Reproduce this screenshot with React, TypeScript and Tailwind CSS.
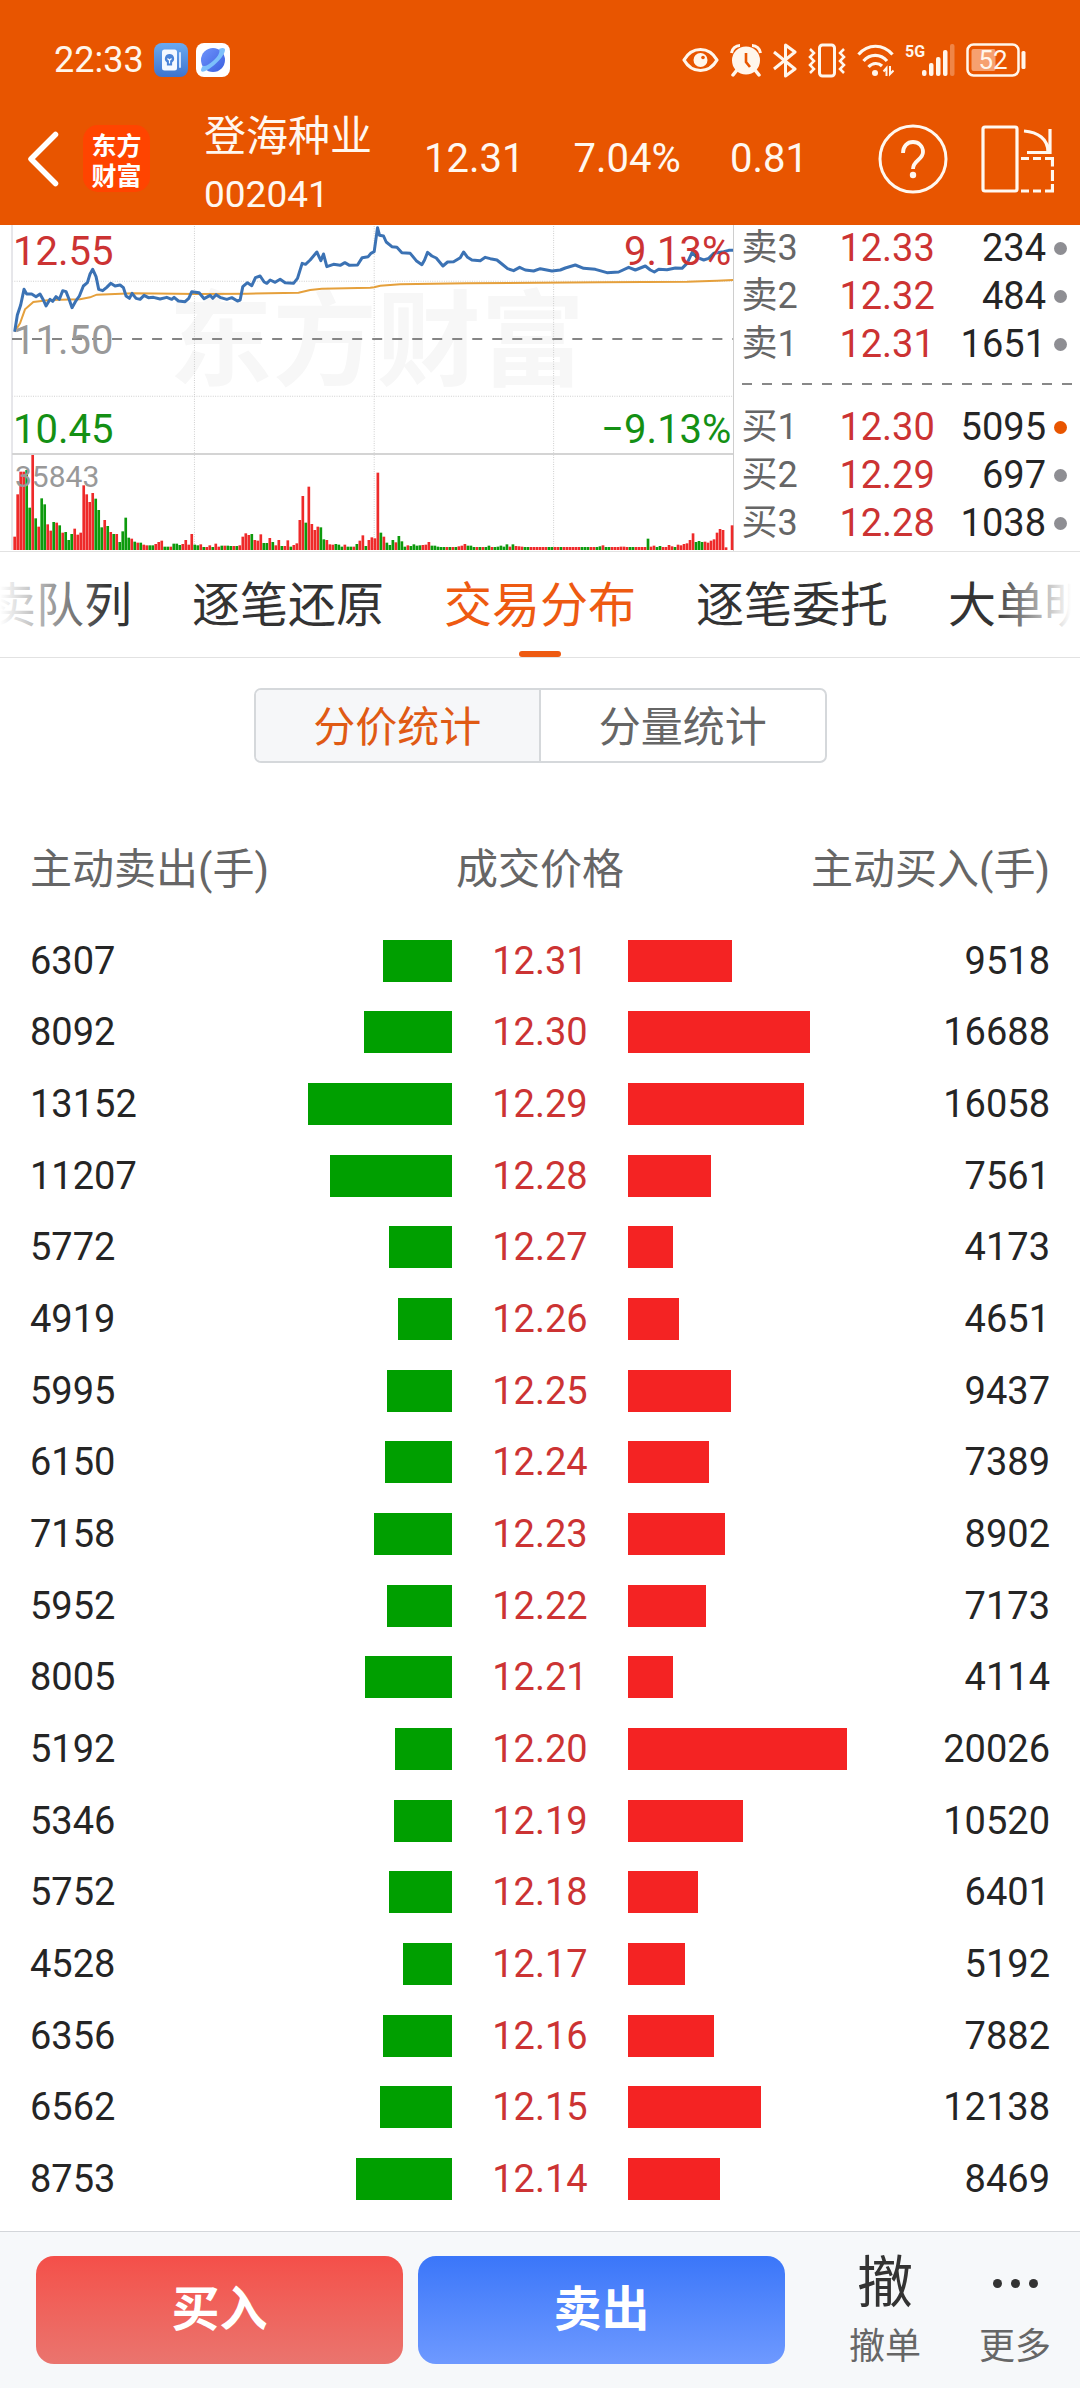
import React, { useState } from 'react';

interface PriceRow {
    sell: number;
    price: string;
    buy: number;
}

interface QuoteRow {
    label: string;
    price: string;
    volume: number;
    active?: boolean;
}

const ROWS: PriceRow[] = [
    { sell: 6307, price: '12.31', buy: 9518 },
    { sell: 8092, price: '12.30', buy: 16688 },
    { sell: 13152, price: '12.29', buy: 16058 },
    { sell: 11207, price: '12.28', buy: 7561 },
    { sell: 5772, price: '12.27', buy: 4173 },
    { sell: 4919, price: '12.26', buy: 4651 },
    { sell: 5995, price: '12.25', buy: 9437 },
    { sell: 6150, price: '12.24', buy: 7389 },
    { sell: 7158, price: '12.23', buy: 8902 },
    { sell: 5952, price: '12.22', buy: 7173 },
    { sell: 8005, price: '12.21', buy: 4114 },
    { sell: 5192, price: '12.20', buy: 20026 },
    { sell: 5346, price: '12.19', buy: 10520 },
    { sell: 5752, price: '12.18', buy: 6401 },
    { sell: 4528, price: '12.17', buy: 5192 },
    { sell: 6356, price: '12.16', buy: 7882 },
    { sell: 6562, price: '12.15', buy: 12138 },
    { sell: 8753, price: '12.14', buy: 8469 },
];

const MAX_VOLUME = Math.max(...ROWS.map((r) => Math.max(r.sell, r.buy)));

const ASKS: QuoteRow[] = [
    { label: '卖3', price: '12.33', volume: 234 },
    { label: '卖2', price: '12.32', volume: 484 },
    { label: '卖1', price: '12.31', volume: 1651 },
];

const BIDS: QuoteRow[] = [
    { label: '买1', price: '12.30', volume: 5095, active: true },
    { label: '买2', price: '12.29', volume: 697 },
    { label: '买3', price: '12.28', volume: 1038 },
];

const TABS = ['买卖队列', '逐笔还原', '交易分布', '逐笔委托', '大单明细'];

const PRICE_LINE =
    '44,335 52,285 62,255 72,208 80,222 95,222 108,230 120,222 130,240 138,258 150,238 158,244 168,230 178,238 188,212 198,215 208,240 216,263 226,245 238,228 250,198 262,188 270,162 278,148 288,170 296,208 308,212 320,202 332,190 345,198 360,195 370,203 378,228 388,235 396,220 408,235 420,238 432,226 445,233 460,232 480,237 500,232 515,238 522,232 535,243 555,245 566,235 575,215 597,218 612,236 630,226 638,235 648,224 662,233 680,238 695,233 712,243 720,240 728,200 742,188 755,197 766,173 780,168 792,186 800,190 810,180 825,187 840,178 855,188 880,190 892,175 906,130 916,133 930,120 950,96 962,122 970,102 980,140 1000,133 1020,136 1034,128 1048,136 1072,135 1086,113 1104,110 1112,100 1122,95 1132,23 1138,46 1150,48 1158,66 1175,80 1190,82 1205,98 1230,100 1248,122 1265,134 1273,120 1282,97 1295,108 1308,114 1328,138 1342,126 1360,125 1380,113 1390,96 1402,112 1415,120 1440,122 1455,112 1470,116 1490,120 1505,132 1522,146 1540,152 1558,142 1575,150 1600,153 1620,146 1655,153 1680,150 1695,144 1725,135 1750,145 1785,148 1820,158 1855,156 1885,142 1905,150 1935,138 1950,150 1962,156 1975,148 2000,149 2025,144 2045,145 2060,130 2075,98 2090,112 2110,120 2125,115 2140,100 2170,95 2185,91 2198,91';

const AVERAGE_LINE =
    '44,335 60,310 75,268 100,246 150,240 240,238 270,232 290,224 400,220 590,222 740,221 895,218 930,210 965,206 1110,203 1122,202 1140,197 1200,193 1400,190 1800,187 2060,185 2150,182 2198,180';

// one token per minute: direction + height
const VOLUMES = (
    'r40 r167 r235 r235 g240 g127 r285 g95 r70 g155 g137 r77 r58 g84 r82 g74 r52 g54 g30 g48 ' +
    'r64 r46 r52 r194 r167 r144 r171 g154 g120 g68 r90 g72 r54 g48 r48 g24 g56 g97 g37 r34 ' +
    'g25 r22 g22 r16 r14 g14 g14 r18 r24 r28 g10 g10 r10 g19 g19 g15 r18 r30 r16 r48 ' +
    'g16 g14 r17 g9 r9 r14 g9 r19 r10 g13 r13 g13 g12 r12 g12 r14 r40 r50 r45 g48 ' +
    'r30 r28 r47 g21 g21 r36 g24 r14 r30 g12 r12 r29 g10 r15 r20 r90 r162 g82 r190 r78 ' +
    'r60 r70 g68 g32 r30 r17 r16 g18 g16 g10 r16 g10 g10 r10 g18 r28 r44 g12 r30 r38 ' +
    'r35 r232 g52 r40 g22 g15 g30 r23 g42 g26 g10 r14 g12 g17 g13 g14 r15 r16 r24 g13 ' +
    'g13 g10 g9 g9 r9 g9 r9 g9 r11 r13 r18 g13 g13 g9 r9 g9 r9 g9 g13 r9 ' +
    'g9 g10 g13 g10 g17 r10 g17 r12 r11 r10 g9 g9 r9 r9 r9 r9 r9 r9 g9 g9 ' +
    'r9 r9 g9 r9 r9 r9 r9 r9 r9 g9 g9 g9 r9 r9 g9 g11 r14 g9 g9 r9 ' +
    'r9 r9 r10 r10 r9 g9 g9 r9 r9 r9 r9 g34 r10 r13 g9 g12 r9 r9 r15 r11 ' +
    'g9 r16 r14 r18 r20 r30 r50 g24 g27 g24 r25 r22 r28 r32 r52 r63 r60 r8 r0 r74'
).split(' ');

const StatusBar: React.FC = () => (
    <div className="flex h-9 items-center justify-between px-[54px] text-[#fff6ec]">
        <div className="flex items-center gap-2">
            <span className="text-[36px] leading-9">22:33</span>
            <svg className="ml-0.5 h-[34px] w-[34px]" viewBox="0 0 34 34" aria-hidden="true">
                <defs>
                    <linearGradient id="cardBg" x1="0" y1="0" x2="0" y2="1">
                        <stop offset="0" stopColor="#6aaaf0" />
                        <stop offset="1" stopColor="#3e74cf" />
                    </linearGradient>
                </defs>
                <rect width="34" height="34" rx="8" fill="url(#cardBg)" />
                <rect x="8" y="6.5" width="15" height="21" rx="2.5" fill="#f4f8ff" />
                <rect x="25" y="9" width="2" height="16" rx="1" fill="#cfe0fb" />
                <path d="M15.5 11a4.6 4.6 0 0 0-2.6 8.400V22.5h5.200v-3.100A4.600 4.600 0 0 0 15.500 11z" fill="#4a83d8" />
                <path d="M13.5 15.5l2 2 2-2M15.5 17.500v3" stroke="#fff" strokeWidth="1.2" fill="none" />
            </svg>
            <svg className="h-[34px] w-[34px]" viewBox="0 0 34 34" aria-hidden="true">
                <defs>
                    <linearGradient id="planet" x1="0" y1="0" x2="1" y2="1">
                        <stop offset="0" stopColor="#6f94fb" />
                        <stop offset="1" stopColor="#3a5fe0" />
                    </linearGradient>
                </defs>
                <rect width="34" height="34" rx="8" fill="#fff" />
                <circle cx="17" cy="17" r="12" fill="url(#planet)" />
                <path
                    d="M23 6c3.5-1.800 6-1.200 6 .8 0 4-5 10.500-11 15.500-5.500 4.600-11 7.500-12.600 6-1-1 0-3.500 1.600-5.500 2 1.200 6-1.200 10.500-5.300C22 13.500 24.500 9 23 6z"
                    fill="#7cc0fb"
                />
            </svg>
        </div>
        <div className="flex items-center gap-[11px]">
            <svg className="h-[26px] w-[37px]" viewBox="0 0 37 26" fill="none" aria-hidden="true">
                <path d="M2 13C6 6 12 2.500 18.500 2.500S31 6 35 13c-4 7-10 10.500-16.500 10.500S6 20 2 13z" stroke="currentColor" strokeWidth="3.2" strokeLinejoin="round" />
                <circle cx="18.5" cy="13" r="7" fill="currentColor" />
                <circle cx="21" cy="10.5" r="1.8" fill="#e85500" />
            </svg>
            <svg className="h-[34px] w-8" viewBox="0 0 32 34" fill="none" aria-hidden="true">
                <path d="M1.500 10A8.500 8.500 0 0 1 10 2.500M30.500 10A8.500 8.500 0 0 0 22 2.500" stroke="currentColor" strokeWidth="3" />
                <path d="M7 27l-4 5M25 27l4 5" stroke="currentColor" strokeWidth="3.5" strokeLinecap="round" />
                <circle cx="16" cy="17.5" r="14" fill="currentColor" />
                <path d="M16 10v9l4 5" stroke="#e85500" strokeWidth="2.6" />
            </svg>
            <svg className="h-[35px] w-6" viewBox="0 0 24 35" fill="none" aria-hidden="true">
                <path d="M1 9l21 17-9.500 7V2L22 9 1 26" stroke="currentColor" strokeWidth="3" strokeLinejoin="round" />
            </svg>
            <svg className="h-[35px] w-[38px]" viewBox="0 0 38 35" fill="none" stroke="currentColor" aria-hidden="true">
                <rect x="11.5" y="2" width="15" height="31" rx="3" strokeWidth="3" />
                <path d="M2 6l4 4-4 4 4 4-4 4 4 4-4 4M36 6l-4 4 4 4-4 4 4 4-4 4 4 4" strokeWidth="2.5" />
            </svg>
            <svg className="h-[33px] w-[37px]" viewBox="0 0 37 33" fill="none" stroke="currentColor" aria-hidden="true">
                <path d="M1.500 10.500C11-.5 26-.5 35.500 10.500M6.500 17c6.500-7.500 17-7.500 23.500 0M11.500 23c4-4.500 10-4.500 13.500-1" strokeWidth="3.2" />
                <circle cx="18" cy="29" r="3" fill="currentColor" stroke="none" />
                <path d="M26.500 27.500l3-3.500v8M33 22v8l3.500-3.500" strokeWidth="2" />
            </svg>
            <svg className="h-[34px] w-[50px]" viewBox="0 0 50 34" fill="currentColor" aria-hidden="true">
                <text x="0" y="14" fontSize="16" fontWeight="700">
                    5G
                </text>
                <rect x="17" y="27" width="4.5" height="6" rx="2" />
                <rect x="24" y="20" width="4.5" height="13" rx="2" />
                <rect x="31" y="14" width="4.5" height="19" rx="2" />
                <rect x="38" y="7" width="4.5" height="26" rx="2" />
                <rect x="45" y="1" width="4.5" height="32" rx="2" opacity="0.3" />
            </svg>
            <svg className="h-[34px] w-[60px]" viewBox="0 0 60 34" fill="none" aria-hidden="true">
                <rect x="1.5" y="1.5" width="51" height="31" rx="6" stroke="currentColor" strokeWidth="2.5" />
                <rect x="5.5" y="6" width="24" height="22" rx="2" fill="#f6a070" />
                <text x="27" y="26" fontSize="26" textAnchor="middle" fill="currentColor">
                    52
                </text>
                <rect x="55.5" y="8" width="4" height="18" rx="1.5" fill="currentColor" />
            </svg>
        </div>
    </div>
);

const NavBar: React.FC = () => (
    <div className="flex h-[133px] items-center pl-[27px] pr-[26px] text-[#fff8f0]">
        <button type="button" aria-label="返回">
            <svg className="h-14 w-8" viewBox="0 0 32 56" fill="none" stroke="#fff" strokeWidth="5.5" strokeLinecap="round" strokeLinejoin="round">
                <path d="M28.500 3.500L4 28l24.500 24.500" />
            </svg>
        </button>
        <div className="ml-6 flex h-[67px] w-[67px] shrink-0 items-center justify-center rounded-[15px] bg-[#ff4400]">
            <span className="w-[50px] font-['Noto_Sans_CJK_SC'] text-[25px] font-bold leading-[30px] text-white">东方财富</span>
        </div>
        <div className="ml-[54px] self-end pb-px">
            <h1 className="text-[42px] leading-[58px]">登海种业</h1>
            <p className="text-[37px] leading-[58px]">002041</p>
        </div>
        <div className="ml-[52px] flex flex-1 justify-between text-[40px]">
            <span>12.31</span>
            <span>7.04%</span>
            <span>0.81</span>
        </div>
        <button type="button" aria-label="帮助" className="ml-[70px]">
            <svg className="h-[70px] w-[70px]" viewBox="0 0 70 70" fill="none" stroke="currentColor" strokeWidth="3">
                <circle cx="35" cy="35" r="33" />
                <path d="M25 29c0-7 4.500-11 10-11s10 4 10 10c0 8-10 8-10 17" strokeWidth="3.8" />
                <circle cx="35" cy="51" r="3.2" fill="currentColor" stroke="none" />
            </svg>
        </button>
        <button type="button" aria-label="横屏" className="ml-[33px]">
            <svg className="h-[68px] w-[73px]" viewBox="0 0 73 68" fill="none" stroke="currentColor" strokeWidth="3.2">
                <rect x="2" y="2" width="34" height="64" rx="2" />
                <path d="M43 6c14 1 24 8 24 21M69 4v23.500H46" />
                <path d="M40 33.500h8M52 33.500h8M64 33.500h7.500v8M71.500 45v11M71.500 59v7H64M60 66h-8M48 66h-8" />
            </svg>
        </button>
    </div>
);

const MinuteChart: React.FC = () => (
    <div className="relative h-[326px] w-[68%] overflow-hidden text-[40px] leading-[40px]">
        <div className="absolute inset-x-0 top-12 pl-[19px] text-center font-['Noto_Sans_CJK_SC'] text-[104px] font-bold leading-[120px] text-[#f7f7f7]">
            东方财富
        </div>
        <svg className="absolute inset-0 h-full w-full" viewBox="0 15 2202 978" preserveAspectRatio="none" fill="none" aria-hidden="true">
            <path d="M36 184H2198M36 529H2198M583 18V990M1122 18V990M1660 18V990" stroke="#cfcfcf" strokeWidth="3" strokeDasharray="3 4" />
            <path d="M36 15V990" stroke="#e2e2e6" strokeWidth="5" />
            <path d="M36 702H2198" stroke="#d4d4d4" strokeWidth="6" />
            <path d="M2200 15V993" stroke="#cccccc" strokeWidth="4" />
            <path d="M36 357H2198" stroke="#858585" strokeWidth="6" strokeDasharray="30 30" />
            {VOLUMES.map((v, i) => {
                const h = Number(v.slice(1));
                return <rect key={i} x={40 + i * 9} y={990 - h} width="8" height={h} fill={v[0] === 'r' ? '#ee2a2a' : '#0d9a0d'} />;
            })}
            <polyline points={AVERAGE_LINE} stroke="#e5a03c" strokeWidth="6" />
            <polyline points={PRICE_LINE} stroke="#3b72b4" strokeWidth="9" strokeLinejoin="round" />
        </svg>
        <span className="absolute left-[13px] top-[7px] text-[#cc3333]">12.55</span>
        <span className="absolute left-[13px] top-[96px] text-[#999999]">11.50</span>
        <span className="absolute left-[13px] top-[185px] text-[#149014]">10.45</span>
        <span className="absolute right-[3px] top-[7px] text-[#cc3333]">9.13%</span>
        <span className="absolute right-[3px] top-[185px] text-[#149014]">−9.13%</span>
        <span className="absolute left-[15px] top-[232px] text-[30px] text-[#999999]">35843</span>
    </div>
);

const QuoteList: React.FC<{ rows: QuoteRow[] }> = ({ rows }) => (
    <ul className="flex flex-col gap-[2px]">
        {rows.map((row) => (
            <li key={row.label} className="flex h-[46px] items-center pl-[7px] pr-[13px] text-[38px] leading-[46px]">
                <span className="w-[98px] text-[36px] text-[#666666]">{row.label}</span>
                <span className="text-[#cc3333]">{row.price}</span>
                <span className="flex-1 text-right text-[#252525]">{row.volume}</span>
                <i className={`ml-2 h-[13px] w-[13px] rounded-full ${row.active ? 'bg-[#e85500]' : 'bg-[#8e8e93]'}`} />
            </li>
        ))}
    </ul>
);

const TabBar: React.FC = () => {
    const [active, setActive] = useState(2);

    return (
        <nav className="relative flex h-[106px] justify-center gap-[60px] overflow-hidden border-b border-[#e2e2e2]">
            {TABS.map((tab, i) => (
                <button
                    key={tab}
                    type="button"
                    onClick={() => setActive(i)}
                    className={`relative shrink-0 pt-[3px] text-[48px] leading-[48px] ${i === active ? 'text-[#ee5a11]' : 'text-[#333333]'}`}
                >
                    {tab}
                    {i === active && <span className="absolute bottom-0 left-1/2 h-[6px] w-[42px] -translate-x-1/2 rounded-full bg-[#ee5a11]" />}
                </button>
            ))}
            <div className="pointer-events-none absolute inset-y-0 left-0 w-[110px] bg-linear-to-r from-white to-transparent" />
            <div className="pointer-events-none absolute inset-y-0 right-0 w-[88px] bg-linear-to-l from-white from-10% to-transparent" />
        </nav>
    );
};

const PriceTable: React.FC = () => (
    <table className="mt-[50px] h-[1402px] w-full table-fixed">
        <colgroup>
            <col />
            <col className="w-[21.5%]" />
            <col className="w-[17.2%]" />
            <col className="w-[21.5%]" />
            <col />
        </colgroup>
        <thead>
            <tr className="h-[112px] text-[42px] text-[#666666]">
                <th colSpan={2} className="text-left font-normal">主动卖出(手)</th>
                <th className="whitespace-nowrap font-normal">成交价格</th>
                <th colSpan={2} className="text-right font-normal">主动买入(手)</th>
            </tr>
        </thead>
        <tbody className="text-[38px] leading-[42px] text-[#252525]">
            {ROWS.map((row) => (
                <tr key={row.price}>
                    <td>{row.sell}</td>
                    <td>
                        <div className="ml-auto h-[42px] bg-[#009f00]" style={{ width: `${(row.sell / MAX_VOLUME) * 100}%` }} />
                    </td>
                    <td className="text-center text-[#cc3333]">{row.price}</td>
                    <td>
                        <div className="h-[42px] bg-[#f42323]" style={{ width: `${(row.buy / MAX_VOLUME) * 100}%` }} />
                    </td>
                    <td className="text-right">{row.buy}</td>
                </tr>
            ))}
        </tbody>
    </table>
);

const TradeBar: React.FC = () => (
    <footer className="flex items-start border-t border-[#d3d6da] bg-[#f6f8fa] pb-1 pl-9 pt-6">
        <div className="flex h-[108px] flex-1 gap-[15px] text-[48px] font-bold text-white">
            <button type="button" className="flex-1 rounded-[18px] bg-linear-to-b from-[#f44f49] to-[#ea746e]">买入</button>
            <button type="button" className="flex-1 rounded-[18px] bg-linear-to-b from-[#3a76f9] to-[#6e99ff]">卖出</button>
        </div>
        <button type="button" className="ml-[35px] flex w-[130px] flex-col items-center text-[#333333]">
            <span className="text-[56px] leading-[54px]">撤</span>
            <span className="text-[36px] leading-[74px] text-[#666666]">撤单</span>
        </button>
        <button type="button" className="flex w-[130px] flex-col items-center text-[#333333]">
            <span className="flex h-[54px] items-center gap-[9px]">
                <i className="h-[9px] w-[9px] rounded-full bg-[#333333]" />
                <i className="h-[9px] w-[9px] rounded-full bg-[#333333]" />
                <i className="h-[9px] w-[9px] rounded-full bg-[#333333]" />
            </span>
            <span className="text-[36px] leading-[74px] text-[#666666]">更多</span>
        </button>
    </footer>
);

export default function App() {
    const [mode, setMode] = useState<'price' | 'volume'>('price');

    return (
        <div className="flex min-h-screen flex-col bg-white font-[Roboto,'Noto_Sans_CJK_SC',sans-serif]">
            <header className="bg-[#e85500] pt-[42px]">
                <StatusBar />
                <div className="pt-[14px]">
                    <NavBar />
                </div>
            </header>

            <section className="flex border-b border-[#e2e2e2]">
                <MinuteChart />
                <div className="flex-1">
                    <QuoteList rows={ASKS} />
                    <svg className="my-[15px] ml-2 h-[7px] w-[330px]" aria-hidden="true">
                        <path d="M0 2H330" stroke="#888888" strokeWidth="2" strokeDasharray="10 10" />
                    </svg>
                    <QuoteList rows={BIDS} />
                </div>
            </section>

            <TabBar />

            <main className="flex-1 px-[30px] pt-[30px]">
                <div className="mx-auto flex h-[75px] w-[573px] overflow-hidden rounded-[7px] border-2 border-[#d5d8db] text-[42px]">
                    <button
                        type="button"
                        onClick={() => setMode('price')}
                        className={`flex-1 border-r-2 border-[#d5d8db] pt-[3px] ${mode === 'price' ? 'bg-[#f6f7f9] text-[#e05a14]' : 'text-[#666666]'}`}
                    >
                        分价统计
                    </button>
                    <button
                        type="button"
                        onClick={() => setMode('volume')}
                        className={`flex-1 pt-[3px] ${mode === 'volume' ? 'bg-[#f6f7f9] text-[#e05a14]' : 'text-[#666666]'}`}
                    >
                        分量统计
                    </button>
                </div>
                <PriceTable />
            </main>

            <TradeBar />
        </div>
    );
}
